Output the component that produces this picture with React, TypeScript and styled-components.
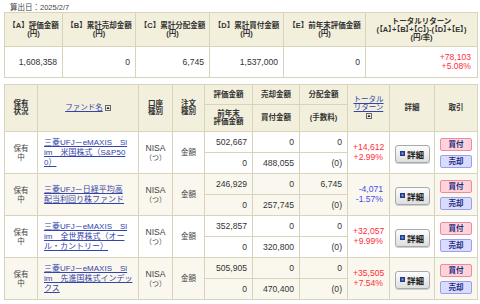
import styled, { createGlobalStyle } from 'styled-components';

const GlobalStyle = createGlobalStyle`
  body {
    margin: 0;
    background: #fff;
    color: #333;
    font-family: "Liberation Sans", "Noto Sans CJK JP", sans-serif;
  }
`;

type Fund = {
  name: string[];
  value: string;
  lastYear: string;
  sold: string;
  bought: string;
  dividend: string;
  fee: string;
  returnYen: string;
  returnRate: string;
};

const funds: Fund[] = [
  {
    name: ['三菱UFJ－eMAXIS　Sl', 'im　米国株式（S&P50', '0）'],
    value: '502,667',
    lastYear: '0',
    sold: '0',
    bought: '488,055',
    dividend: '0',
    fee: '(0)',
    returnYen: '+14,612',
    returnRate: '+2.99%',
  },
  {
    name: ['三菱UFJ－日経平均高', '配当利回り株ファンド'],
    value: '246,929',
    lastYear: '0',
    sold: '0',
    bought: '257,745',
    dividend: '6,745',
    fee: '(0)',
    returnYen: '-4,071',
    returnRate: '-1.57%',
  },
  {
    name: ['三菱UFJ－eMAXIS　Sl', 'im　全世界株式（オー', 'ル・カントリー）'],
    value: '352,857',
    lastYear: '0',
    sold: '0',
    bought: '320,800',
    dividend: '0',
    fee: '(0)',
    returnYen: '+32,057',
    returnRate: '+9.99%',
  },
  {
    name: ['三菱UFJ－eMAXIS　Sl', 'im　先進国株式インデッ', 'クス'],
    value: '505,905',
    lastYear: '0',
    sold: '0',
    bought: '470,400',
    dividend: '0',
    fee: '(0)',
    returnYen: '+35,505',
    returnRate: '+7.54%',
  },
];

const summaryCols = [58, 73, 74, 74, 82, 112];
const holdingCols = [33, 101, 34, 32, 48, 47, 48, 42, 45, 43];

const SortIcon = () => (
  <svg width="6" height="6" viewBox="0 0 6 6">
    <rect x="0.5" y="0.5" width="5" height="5" fill="#f4f4f4" stroke="#666" />
    <path d="M3 1.6 L4.6 4 L1.4 4 Z" fill="#222" />
  </svg>
);

const DetailIcon = () => (
  <svg width="5" height="5" viewBox="0 0 5 5">
    <rect width="5" height="5" fill="#1f3b8c" />
    <rect x="1.5" y="1.5" width="2" height="2" fill="#7ea2e0" />
  </svg>
);

const App = () => {
  return (
    <>
      <GlobalStyle />
      <Page>
        <DateLabel>算出日：2025/2/7</DateLabel>
        <Table>
          <colgroup>
            {summaryCols.map((w, i) => (
              <col key={i} style={{ width: w }} />
            ))}
          </colgroup>
          <thead>
            <Row $h={34}>
              <SummaryTh>【A】評価金額<br />(円)</SummaryTh>
              <SummaryTh>【B】累計売却金額<br />(円)</SummaryTh>
              <SummaryTh>【C】累計分配金額<br />(円)</SummaryTh>
              <SummaryTh>【D】累計買付金額<br />(円)</SummaryTh>
              <SummaryTh>【E】前年末評価金額<br />(円)</SummaryTh>
              <SummaryTh>
                トータルリターン
                <br />
                <Formula>(【A】+【B】+【C】)-(【D】+【E】)</Formula>
                <br />
                (円/率)
              </SummaryTh>
            </Row>
          </thead>
          <tbody>
            <Row $h={31}>
              <Num>1,608,358</Num>
              <Num>0</Num>
              <Num>6,745</Num>
              <Num>1,537,000</Num>
              <Num>0</Num>
              <ReturnCell $negative={false}>
                +78,103
                <br />
                +5.08%
              </ReturnCell>
            </Row>
          </tbody>
        </Table>

        <HoldingsTable>
          <colgroup>
            {holdingCols.map((w, i) => (
              <col key={i} style={{ width: w }} />
            ))}
          </colgroup>
          <thead>
            <Row $h={20}>
              <Th rowSpan={2}>保有<br />状況</Th>
              <Th rowSpan={2}>
                <HeadLink>ファンド名</HeadLink> <SortIcon />
              </Th>
              <Th rowSpan={2}>口座<br />種別</Th>
              <Th rowSpan={2}>注文<br />種別</Th>
              <Th>評価金額</Th>
              <Th>売却金額</Th>
              <Th>分配金額</Th>
              <Th rowSpan={2}>
                <HeadLink>トータル<br />リターン</HeadLink>
                <br />
                <SortIcon />
              </Th>
              <Th rowSpan={2}>詳細</Th>
              <Th rowSpan={2}>取引</Th>
            </Row>
            <Row $h={27}>
              <Th>前年末<br />評価金額</Th>
              <Th>買付金額</Th>
              <Th>(手数料)</Th>
            </Row>
          </thead>
          <tbody>
            {funds.map((f, i) => (
              <FundRows key={i} fund={f} alt={i % 2 === 1} />
            ))}
          </tbody>
        </HoldingsTable>
      </Page>
    </>
  );
};

const FundRows = ({ fund, alt }: { fund: Fund; alt: boolean }) => {
  const negative = fund.returnYen.startsWith('-');
  return (
    <>
      <BodyRow $alt={alt} $h={21}>
        <TextCell rowSpan={2}>保有<br />中</TextCell>
        <NameCell rowSpan={2}>
          <FundLink>
            {fund.name.map((line, j) => (
              <span key={j}>
                {j > 0 && <br />}
                {line}
              </span>
            ))}
          </FundLink>
        </NameCell>
        <AccountCell rowSpan={2}>
          NISA
          <br />
          <small>（つ）</small>
        </AccountCell>
        <TextCell rowSpan={2}>金額</TextCell>
        <Num>{fund.value}</Num>
        <Num>{fund.sold}</Num>
        <Num>{fund.dividend}</Num>
        <ReturnCell rowSpan={2} $negative={negative}>
          {fund.returnYen}
          <br />
          {fund.returnRate}
        </ReturnCell>
        <CenterCell rowSpan={2}>
          <DetailButton>
            <DetailIcon />
            詳細
          </DetailButton>
        </CenterCell>
        <CenterCell rowSpan={2}>
          <TradeStack>
            <TradeButton $kind="buy">買付</TradeButton>
            <TradeButton $kind="sell">売却</TradeButton>
          </TradeStack>
        </CenterCell>
      </BodyRow>
      <BodyRow $alt={alt} $h={21}>
        <Num>{fund.lastYear}</Num>
        <Num>{fund.bought}</Num>
        <Num>{fund.fee}</Num>
      </BodyRow>
    </>
  );
};

const Page = styled.div`
  padding: 3px 3px 0 4px;
  width: 473px;
`;

const DateLabel = styled.div`
  height: 9px;
  margin-left: 6px;
  font-size: 7.5px;
  line-height: 9px;
  color: #444;
`;

const Table = styled.table`
  width: 473px;
  table-layout: fixed;
  border-collapse: collapse;
`;

const HoldingsTable = styled(Table)`
  margin-top: 6px;
`;

const Row = styled.tr<{ $h: number }>`
  height: ${(p) => p.$h}px;
`;

const BodyRow = styled(Row)<{ $alt: boolean }>`
  background: ${(p) => (p.$alt ? '#faf8ee' : '#fff')};
`;

const Th = styled.th`
  background: #f2efdc;
  border: 1px solid #d8d3bb;
  padding: 0 1px;
  font-size: 7.5px;
  line-height: 8px;
  font-weight: bold;
  color: #333;
  text-align: center;
  vertical-align: middle;

  svg {
    vertical-align: -1px;
  }
`;

const SummaryTh = styled(Th)`
  font-size: 7.5px;
  line-height: 8px;
`;

const Formula = styled.span`
  white-space: nowrap;
  font-feature-settings: "palt";
`;

const HeadLink = styled.a`
  color: #3344aa;
  text-decoration: underline;
  font-weight: normal;
  cursor: pointer;
`;

const Td = styled.td`
  border: 1px solid #d8d3bb;
  padding: 0 5px;
  vertical-align: middle;
`;

const Num = styled(Td)`
  text-align: right;
  font-size: 8.6px;
  line-height: 10px;
`;

const ReturnCell = styled(Num)<{ $negative: boolean }>`
  padding-right: 6px;
  line-height: 9.5px;
  color: ${(p) => (p.$negative ? '#4a4af0' : '#ff2d3a')};
`;

const TextCell = styled(Td)`
  padding: 0 2px;
  text-align: center;
  font-size: 7.5px;
  line-height: 9px;
  color: #444;
`;

const AccountCell = styled(TextCell)`
  font-size: 8.6px;

  small {
    font-size: 7px;
  }
`;

const NameCell = styled(Td)`
  padding: 0 2px 0 6px;
  text-align: left;
`;

const FundLink = styled.a`
  display: block;
  white-space: nowrap;
  font-size: 8px;
  line-height: 10px;
  color: #3344aa;
  text-decoration: underline;
  cursor: pointer;
`;

const CenterCell = styled(Td)`
  padding: 0;
  text-align: center;
`;

const DetailButton = styled.button`
  display: inline-flex;
  align-items: center;
  justify-content: center;
  gap: 2px;
  width: 35px;
  height: 18px;
  padding: 0;
  border: 1px solid #a9a9a9;
  border-radius: 3px;
  background: linear-gradient(#fdfdfd, #dedede);
  box-shadow: 0 1px 0 #cfcfcf;
  font-family: inherit;
  font-size: 8.5px;
  font-weight: bold;
  color: #222;
`;

const TradeStack = styled.div`
  display: flex;
  flex-direction: column;
  align-items: center;
  gap: 4px;
`;

const TradeButton = styled.button<{ $kind: 'buy' | 'sell' }>`
  width: 32px;
  height: 13px;
  padding: 0;
  border: 1px solid ${(p) => (p.$kind === 'buy' ? '#ef8c9c' : '#9aa1ec')};
  border-radius: 2px;
  background: ${(p) => (p.$kind === 'buy' ? '#ffd3db' : '#dadcff')};
  font-family: inherit;
  font-size: 7.5px;
  font-weight: bold;
  line-height: 11px;
  color: #1b2a7c;
`;

export default App;
